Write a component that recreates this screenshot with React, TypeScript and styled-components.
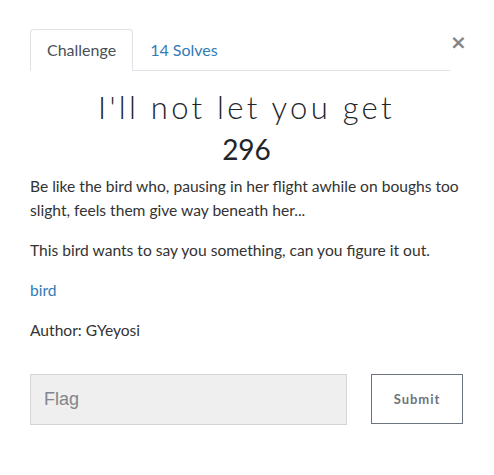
import React from "react";
import styled, { createGlobalStyle } from "styled-components";

const Global = createGlobalStyle`
  html, body { margin: 0; padding: 0; background: #ffffff; }
  body { font-family: Lato, "Open Sans", sans-serif; color: #212529; }
  * { box-sizing: border-box; }
`;

const Modal = styled.div`
  width: 494px;
  height: 466px;
  background: #fff;
  box-shadow: 0 4px 12px rgba(0, 0, 0, 0.09);
  padding: 29px 31px 0 30px;
`;

const Header = styled.div`
  display: flex;
  align-items: flex-start;
`;

const Tabs = styled.ul`
  flex: 1;
  display: flex;
  list-style: none;
  margin: 0;
  padding: 0;
  border-bottom: 1px solid #dee2e6;
  height: 42px;
`;

const Tab = styled.li<{ $active?: boolean }>`
  height: 42px;
  margin-bottom: -1px;
  padding: 0 16px 2px;
  display: flex;
  align-items: center;
  font-size: 16px;
  border: 1px solid ${(p) => (p.$active ? "#dee2e6" : "transparent")};
  border-bottom-color: ${(p) => (p.$active ? "#fff" : "transparent")};
  border-radius: 4px 4px 0 0;
  background: ${(p) => (p.$active ? "#fff" : "transparent")};
  color: ${(p) => (p.$active ? "#495057" : "#337ab7")};
`;

const Close = styled.button`
  border: 0;
  background: none;
  padding: 0;
  margin: 1px 0 0 0;
  width: 13px;
  font-family: "DejaVu Sans", sans-serif;
  font-weight: bold;
  font-size: 20px;
  line-height: 24px;
  color: #858585;
`;

const Title = styled.h2`
  margin: 17px 0 0;
  text-align: center;
  font-family: Lato, sans-serif;
  font-weight: 300;
  font-size: 31px;
  letter-spacing: 3.3px;
  line-height: 38px;
  color: #212529;
`;

const Value = styled.h3`
  margin: 6px 0 8px;
  text-align: center;
  font-weight: 400;
  font-size: 28px;
  line-height: 34px;
  color: #212529;
`;

const Para = styled.p`
  margin: 0 0 16px;
  font-size: 15.6px;
  line-height: 24px;
  color: #333;
`;

const Link = styled.a`
  color: #337ab7;
  text-decoration: none;
`;

const Form = styled.form`
  display: flex;
  gap: 24px;
  margin-top: 32px;
`;

const Input = styled.input`
  flex: 0 0 317px;
  width: 317px;
  height: 51px;
  background: #efefef;
  border: 1px solid #d3d5d9;
  padding: 0 13px;
  font-family: "Liberation Sans", Arial, sans-serif;
  font-size: 18px;
  outline: none;
  &::placeholder { color: #80868b; }
`;

const Submit = styled.button`
  flex: 0 0 92px;
  width: 92px;
  height: 50px;
  background: #fff;
  border: 1.5px solid #6c757d;
  color: #6c757d;
  font-family: Lato, sans-serif;
  font-weight: 700;
  font-size: 13px;
  letter-spacing: 1px;
  padding: 0;
`;

export default function App() {
  return (
    <>
      <Global />
      <Modal>
        <Header>
          <Tabs>
            <Tab $active>Challenge</Tab>
            <Tab>14 Solves</Tab>
          </Tabs>
          <Close aria-label="Close">×</Close>
        </Header>
        <Title>I'll not let you get</Title>
        <Value>296</Value>
        <Para>
          Be like the bird who, pausing in her flight awhile on boughs too
          slight, feels them give way beneath her...
        </Para>
        <Para>This bird wants to say you something, can you figure it out.</Para>
        <Para>
          <Link href="#">bird</Link>
        </Para>
        <Para>Author: GYeyosi</Para>
        <Form onSubmit={(e) => e.preventDefault()}>
          <Input placeholder="Flag" />
          <Submit type="submit">Submit</Submit>
        </Form>
      </Modal>
    </>
  );
}
